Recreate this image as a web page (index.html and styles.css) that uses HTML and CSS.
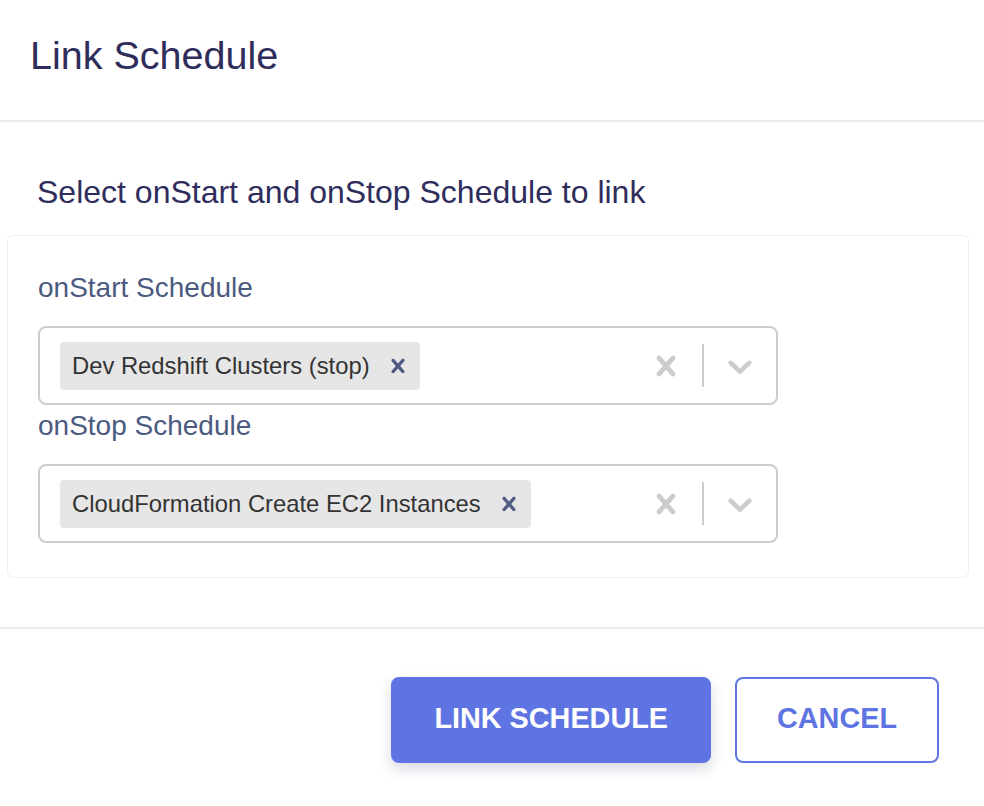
FILE: index.html
```html
<!DOCTYPE html>
<html lang="en">
<head>
  <meta charset="UTF-8" />
  <meta name="viewport" content="width=device-width, initial-scale=1.0"/>
  <title>Link Schedule</title>
  <link rel="stylesheet" href="styles.css">
</head>
<body>
  <div class="modal">
    <header class="modal-header">
      <h2 class="modal-title">Link Schedule</h2>
    </header>

    <div class="modal-body">
      <p class="intro">Select onStart and onStop Schedule to link</p>

      <div class="card">
        <div class="field">
          <label class="field-label">onStart Schedule</label>
          <div class="select">
            <div class="select-values">
              <div class="chip">
                <span class="chip-label">Dev Redshift Clusters (stop)</span>
                <span class="chip-remove">
                  <svg width="28" height="28" viewBox="0 0 20 20"><path d="M14.348 14.849c-0.469 0.469-1.229 0.469-1.697 0l-2.651-3.030-2.651 3.029c-0.469 0.469-1.229 0.469-1.697 0-0.469-0.469-0.469-1.229 0-1.697l2.758-3.15-2.759-3.152c-0.469-0.469-0.469-1.228 0-1.697s1.228-0.469 1.697 0l2.652 3.031 2.651-3.031c0.469-0.469 1.228-0.469 1.697 0s0.469 1.229 0 1.697l-2.758 3.152 2.758 3.15c0.469 0.469 0.469 1.229 0 1.698z"/></svg>
                </span>
              </div>
            </div>
            <div class="select-indicators">
              <span class="indicator">
                <svg width="40" height="40" viewBox="0 0 20 20"><path d="M14.348 14.849c-0.469 0.469-1.229 0.469-1.697 0l-2.651-3.030-2.651 3.029c-0.469 0.469-1.229 0.469-1.697 0-0.469-0.469-0.469-1.229 0-1.697l2.758-3.15-2.759-3.152c-0.469-0.469-0.469-1.228 0-1.697s1.228-0.469 1.697 0l2.652 3.031 2.651-3.031c0.469-0.469 1.228-0.469 1.697 0s0.469 1.229 0 1.697l-2.758 3.152 2.758 3.15c0.469 0.469 0.469 1.229 0 1.698z"/></svg>
              </span>
              <span class="separator"></span>
              <span class="indicator">
                <svg width="40" height="40" viewBox="0 0 20 20"><path d="M4.516 7.548c0.436-0.446 1.043-0.481 1.576 0l3.908 3.747 3.908-3.747c0.533-0.481 1.141-0.446 1.574 0 0.436 0.445 0.408 1.197 0 1.615-0.406 0.418-4.695 4.502-4.695 4.502-0.217 0.223-0.502 0.335-0.787 0.335s-0.57-0.112-0.789-0.335c0 0-4.287-4.084-4.695-4.502s-0.436-1.17 0-1.615z"/></svg>
              </span>
            </div>
          </div>
        </div>

        <div class="field">
          <label class="field-label">onStop Schedule</label>
          <div class="select">
            <div class="select-values">
              <div class="chip">
                <span class="chip-label">CloudFormation Create EC2 Instances</span>
                <span class="chip-remove">
                  <svg width="28" height="28" viewBox="0 0 20 20"><path d="M14.348 14.849c-0.469 0.469-1.229 0.469-1.697 0l-2.651-3.030-2.651 3.029c-0.469 0.469-1.229 0.469-1.697 0-0.469-0.469-0.469-1.229 0-1.697l2.758-3.15-2.759-3.152c-0.469-0.469-0.469-1.228 0-1.697s1.228-0.469 1.697 0l2.652 3.031 2.651-3.031c0.469-0.469 1.228-0.469 1.697 0s0.469 1.229 0 1.697l-2.758 3.152 2.758 3.15c0.469 0.469 0.469 1.229 0 1.698z"/></svg>
                </span>
              </div>
            </div>
            <div class="select-indicators">
              <span class="indicator">
                <svg width="40" height="40" viewBox="0 0 20 20"><path d="M14.348 14.849c-0.469 0.469-1.229 0.469-1.697 0l-2.651-3.030-2.651 3.029c-0.469 0.469-1.229 0.469-1.697 0-0.469-0.469-0.469-1.229 0-1.697l2.758-3.15-2.759-3.152c-0.469-0.469-0.469-1.228 0-1.697s1.228-0.469 1.697 0l2.652 3.031 2.651-3.031c0.469-0.469 1.228-0.469 1.697 0s0.469 1.229 0 1.697l-2.758 3.152 2.758 3.15c0.469 0.469 0.469 1.229 0 1.698z"/></svg>
              </span>
              <span class="separator"></span>
              <span class="indicator">
                <svg width="40" height="40" viewBox="0 0 20 20"><path d="M4.516 7.548c0.436-0.446 1.043-0.481 1.576 0l3.908 3.747 3.908-3.747c0.533-0.481 1.141-0.446 1.574 0 0.436 0.445 0.408 1.197 0 1.615-0.406 0.418-4.695 4.502-4.695 4.502-0.217 0.223-0.502 0.335-0.787 0.335s-0.57-0.112-0.789-0.335c0 0-4.287-4.084-4.695-4.502s-0.436-1.17 0-1.615z"/></svg>
              </span>
            </div>
          </div>
        </div>
      </div>
    </div>

    <footer class="modal-footer">
      <button class="btn btn-primary" type="button">Link Schedule</button>
      <button class="btn btn-secondary" type="button">Cancel</button>
    </footer>
  </div>
</body>
</html>
```

FILE: styles.css
```css
body {
  margin: 0;
  font-family: "Liberation Sans", Arial, sans-serif;
  background: #fff;
  color: #333;
}

.modal-header {
  padding: 31px 30px 41px;
  border-bottom: 2px solid #e8ebef;
}

.modal-title {
  margin: 0;
  font-size: 39.5px;
  line-height: 48px;
  font-weight: normal;
  color: #2f2d5b;
}

.modal-body {
  padding: 50px 15px 49px 7px;
}

.intro {
  margin: 0 0 23px;
  padding-left: 30px;
  font-size: 32px;
  line-height: 40px;
  color: #2f2d5b;
}

.card {
  border: 1px solid #efefef;
  border-radius: 6px;
  padding: 35px 30px 34px;
}

.field + .field {
  margin-top: 4px;
}

.field-label {
  display: block;
  margin-bottom: 21px;
  font-size: 28px;
  line-height: 34px;
  color: #4b5a80;
}

.select {
  width: 740px;
  height: 79px;
  box-sizing: border-box;
  border: 2px solid #ccc;
  border-radius: 8px;
  display: flex;
  align-items: center;
}

.select-values {
  flex: 1;
  display: flex;
  padding: 0 16px;
}

.chip {
  display: flex;
  align-items: center;
  height: 48px;
  margin: 0 4px;
  background: #e6e6e6;
  border-radius: 4px;
}

.chip-label {
  padding: 0 6px 0 12px;
  font-size: 23.8px;
  color: #333;
}

.chip-remove {
  display: flex;
  align-items: center;
  padding: 0 8px;
  fill: #4f5b83;
}

.select-indicators {
  display: flex;
  align-items: center;
  align-self: stretch;
}

.indicator {
  display: flex;
  padding: 16px;
  fill: #ccc;
}

.separator {
  width: 2px;
  align-self: stretch;
  margin: 16px 0;
  background: #ccc;
}

.modal-footer {
  border-top: 2px solid #e8ebef;
  padding: 48px 45px 40px;
  display: flex;
  justify-content: flex-end;
  gap: 24px;
}

.btn {
  height: 86px;
  box-sizing: border-box;
  padding: 0 41px 4px;
  border: 2px solid #5e74e2;
  border-radius: 8px;
  font-family: "Liberation Sans", Arial, sans-serif;
  font-size: 28.8px;
  font-weight: bold;
  text-transform: uppercase;
  cursor: pointer;
}

.btn-primary {
  background: #5e74e2;
  color: #fff;
  box-shadow: 0 6px 14px rgba(40, 50, 90, 0.18);
}

.btn-secondary {
  padding: 0 40px 4px;
  background: #fff;
  color: #5e74e2;
}
```
